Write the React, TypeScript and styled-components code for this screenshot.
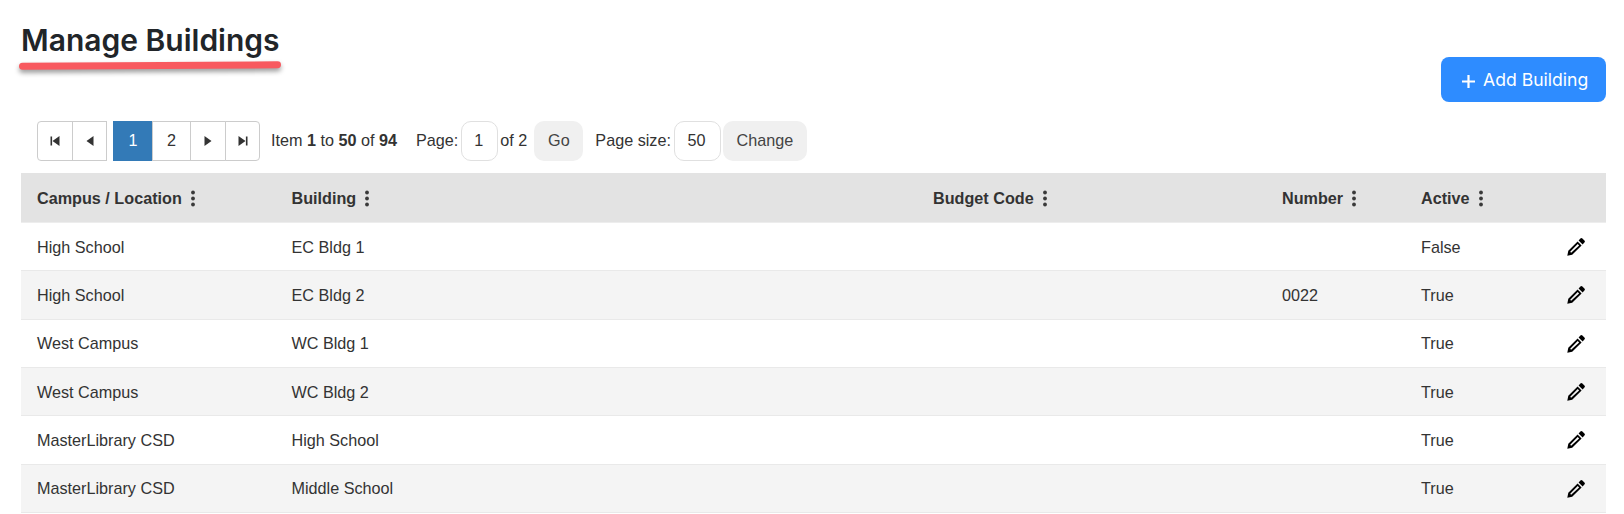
import React from "react";
import styled, { createGlobalStyle } from "styled-components";

const Global = createGlobalStyle`
  html, body { margin: 0; padding: 0; background: #fff; }
  body { font-family: "Liberation Sans", Arial, sans-serif; font-size: 16.2px; color: #333; overflow: hidden; }
`;

const Page = styled.div`
  width: 1624px;
  height: 514px;
  box-sizing: border-box;
  padding: 0 18px 0 21px;
  overflow: hidden;
`;

const TitleBar = styled.div`
  display: flex;
  justify-content: space-between;
  align-items: flex-start;
  height: 121px;
`;

const TitleBlock = styled.div`
  padding-top: 22px;
`;

const Title = styled.h1`
  margin: 0;
  display: inline-block;
  font-family: Inter, sans-serif;
  font-weight: 600;
  font-size: 30px;
  line-height: 36px;
  color: #212529;
  &::after {
    content: "";
    display: block;
    width: 262px;
    height: 7px;
    margin: 4px 0 0 -2px;
    border-radius: 4px;
    background: #f8595f;
    box-shadow: 0 3px 5px rgba(0, 0, 0, 0.4);
    transform: rotate(-0.3deg);
  }
`;

const AddButton = styled.button`
  margin-top: 57px;
  width: 165px;
  height: 45px;
  border: 0;
  border-radius: 8px;
  background: #2e8cff;
  color: #fff;
  font-family: Inter, sans-serif;
  font-size: 17.6px;
  display: flex;
  align-items: center;
  justify-content: flex-start;
  gap: 8px;
  padding: 0 0 0 21px;
`;

const PlusIcon = styled.svg`
  margin-top: 4px;
`;

const Pager = styled.div`
  display: flex;
  align-items: center;
  height: 40px;
  padding-left: 16px;
  margin-bottom: 12px;
`;

const Group = styled.div<{ $ml?: number }>`
  display: flex;
  height: 40px;
  margin-left: ${(p) => p.$ml ?? 0}px;
`;

const PageLink = styled.div<{ $active?: boolean; $first?: boolean; $last?: boolean; $w?: number }>`
  width: ${(p) => p.$w ?? 36}px;
  height: 40px;
  box-sizing: border-box;
  border: 1px solid ${(p) => (p.$active ? "#337ab7" : "#ccc")};
  margin-left: ${(p) => (p.$first ? 0 : -1)}px;
  background: ${(p) => (p.$active ? "#337ab7" : "#fff")};
  color: ${(p) => (p.$active ? "#fff" : "#333")};
  border-radius: ${(p) => (p.$first ? "4px 0 0 4px" : p.$last ? "0 4px 4px 0" : "0")};
  display: flex;
  align-items: center;
  justify-content: center;
  padding-bottom: 1px;
`;

const FlatFirst = styled(PageLink)`
  border-radius: 0;
`;

const PagerText = styled.span<{ $ml?: number; $mr?: number }>`
  margin-left: ${(p) => p.$ml ?? 0}px;
  margin-right: ${(p) => p.$mr ?? 0}px;
  padding-bottom: 1px;
  white-space: pre;
`;

const PageInput = styled.div<{ $w: number }>`
  width: ${(p) => p.$w}px;
  height: 40px;
  box-sizing: border-box;
  border: 1px solid #e0e0e0;
  border-radius: 10px;
  display: flex;
  align-items: center;
  justify-content: center;
  background: #fff;
  padding: 0 2px 1px 0;
`;

const GreyButton = styled.div<{ $w: number; $ml?: number }>`
  width: ${(p) => p.$w}px;
  height: 40px;
  margin-left: ${(p) => p.$ml ?? 0}px;
  border-radius: 10px;
  background: #f0f0f0;
  color: #444;
  display: flex;
  align-items: center;
  justify-content: center;
  padding-bottom: 1px;
  box-sizing: border-box;
`;

const Row = styled.div<{ $alt?: boolean }>`
  display: grid;
  grid-template-columns: 254.5px 641.5px 349px 139px 143px 58px;
  height: 48.33px;
  box-sizing: border-box;
  align-items: center;
  background: ${(p) => (p.$alt ? "#f4f4f4" : "#fff")};
  border-bottom: 1px solid #e9e9e9;
  padding-left: 16px;
  padding-top: 1px;
  width: 1585px;
`;

const HeaderRow = styled(Row)`
  height: 50px;
  background: #e3e3e3;
  border-bottom: 1px solid #ededed;
  font-weight: 700;
`;

const HeaderCell = styled.div`
  display: flex;
  align-items: center;
  gap: 8px;
  color: #333;
`;

const Cell = styled.div`
  color: #333;
`;

const EditCell = styled.div`
  display: flex;
  align-items: center;
  padding-left: 3px;
`;

const Dots = () => (
  <svg width="6" height="17" viewBox="0 0 6 17" fill="#3a3a3a">
    <circle cx="3" cy="2.5" r="1.9" />
    <circle cx="3" cy="8.5" r="1.9" />
    <circle cx="3" cy="14.5" r="1.9" />
  </svg>
);

const Pencil = () => (
  <svg width="18" height="18" viewBox="0 0 18 18">
    <path
      d="M13.4.6a1.4 1.4 0 0 1 2 0l2 2a1.4 1.4 0 0 1 0 2l-1.8 1.8-4-4L13.4.6ZM10.6 3.4l4 4-9.4 9.4L.3 17.7l1-4.9 9.3-9.4ZM3.2 13.8l.9.9 8-7.3-1.4-1.4-7.5 7.8Z"
      fill="#000"
      fillRule="evenodd"
    />
  </svg>
);

const Nav = ({ kind }: { kind: "first" | "prev" | "next" | "last" }) => {
  const paths = {
    first: "M1.5 1.5h1.6v9H1.5zM10.5 1v10L3.5 6z",
    prev: "M9.5 1v10L2.5 6z",
    next: "M2.5 1v10L9.5 6z",
    last: "M8.9 1.5h1.6v9H8.9zM1.5 1v10L8.5 6z",
  };
  return (
    <svg width="12" height="12" viewBox="0 0 12 12" fill="#333">
      <path d={paths[kind]} />
    </svg>
  );
};

const columns = ["Campus / Location", "Building", "Budget Code", "Number", "Active"];

const rows = [
  ["High School", "EC Bldg 1", "", "", "False"],
  ["High School", "EC Bldg 2", "", "0022", "True"],
  ["West Campus", "WC Bldg 1", "", "", "True"],
  ["West Campus", "WC Bldg 2", "", "", "True"],
  ["MasterLibrary CSD", "High School", "", "", "True"],
  ["MasterLibrary CSD", "Middle School", "", "", "True"],
];

export default function App() {
  return (
    <Page>
      <Global />
      <TitleBar>
        <TitleBlock>
          <Title>Manage Buildings</Title>
        </TitleBlock>
        <AddButton>
          <PlusIcon width="13" height="13" viewBox="0 0 13 13" stroke="#fff" strokeWidth="2.2">
            <path d="M6.5 0v13M0 6.5h13" />
          </PlusIcon>
          Add Building
        </AddButton>
      </TitleBar>
      <Pager>
        <Group>
          <PageLink $first><Nav kind="first" /></PageLink>
          <PageLink $w={35}><Nav kind="prev" /></PageLink>
        </Group>
        <Group $ml={6}>
          <FlatFirst $first $active $w={40}>1</FlatFirst>
          <PageLink $w={39}>2</PageLink>
          <PageLink><Nav kind="next" /></PageLink>
          <PageLink $w={35} $last><Nav kind="last" /></PageLink>
        </Group>
        <PagerText $ml={11}>
          Item <b>1</b> to <b>50</b> of <b>94</b>
        </PagerText>
        <PagerText $ml={19} $mr={3}>Page:</PagerText>
        <PageInput $w={37}>1</PageInput>
        <PagerText $ml={2}>of 2</PagerText>
        <GreyButton $w={49} $ml={7}>Go</GreyButton>
        <PagerText $ml={12} $mr={3}>Page size:</PagerText>
        <PageInput $w={47}>50</PageInput>
        <GreyButton $w={84} $ml={2}>Change</GreyButton>
      </Pager>
      <HeaderRow>
        {columns.map((c) => (
          <HeaderCell key={c}>
            {c}
            <Dots />
          </HeaderCell>
        ))}
        <HeaderCell />
      </HeaderRow>
      {rows.map((r, i) => (
        <Row key={i} $alt={i % 2 === 1}>
          {r.map((v, j) => (
            <Cell key={j}>{v}</Cell>
          ))}
          <EditCell><Pencil /></EditCell>
        </Row>
      ))}
    </Page>
  );
}
